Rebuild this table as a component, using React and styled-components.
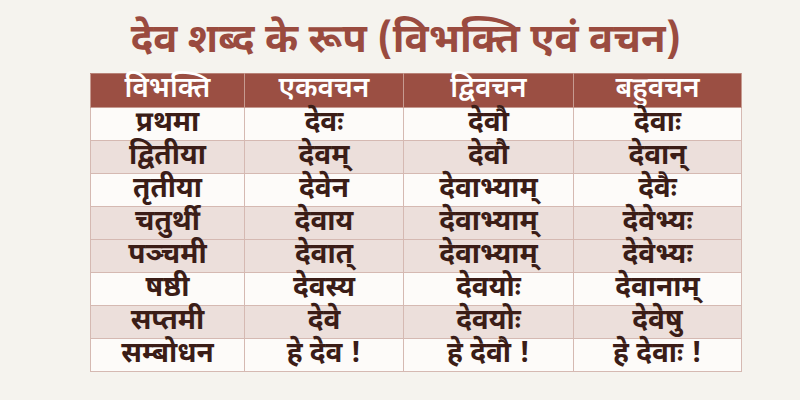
import React from 'react';
import styled, { createGlobalStyle } from 'styled-components';

const GlobalStyle = createGlobalStyle`
  html, body {
    margin: 0;
    padding: 0;
    background: #f5f3ee;
  }
  body {
    font-family: "Noto Sans Devanagari", "Noto Sans", "Liberation Sans", sans-serif;
  }
`;

const Page = styled.div`
  width: 800px;
  height: 400px;
  display: flex;
  flex-direction: column;
  align-items: center;
  background: #f5f3ee;
  overflow: hidden;
`;

const Title = styled.h1`
  margin: 14px 0 0 12px;
  height: 59px;
  font-size: 40px;
  font-weight: 700;
  line-height: 56px;
  color: #9a4b3f;
`;

const Table = styled.table`
  width: 651px;
  margin-left: 32px;
  border-collapse: collapse;
  table-layout: fixed;
`;

const HeadCell = styled.th`
  height: 33px;
  padding: 0;
  background: #9b4f43;
  color: #ffffff;
  font-size: 28px;
  font-weight: 600;
  line-height: 33px;
  text-align: center;
  border: 1px solid #c69a90;
  border-top-color: #b88277;
`;

const Row = styled.tr`
  background: ${(p) => (p.$shaded ? '#ecdfdb' : '#fdfbf9')};
`;

const Cell = styled.td`
  height: 32px;
  padding: 0;
  color: #3b1d17;
  font-size: 28px;
  font-weight: 700;
  line-height: 32px;
  text-align: center;
  border: 1px solid #d5b9b2;
`;

const heads = ['विभक्ति', 'एकवचन', 'द्विवचन', 'बहुवचन'];
const widths = [154, 159, 170, 168];

const rows = [
  { cells: ['प्रथमा', 'देवः', 'देवौ', 'देवाः'], shaded: false },
  { cells: ['द्वितीया', 'देवम्', 'देवौ', 'देवान्'], shaded: true },
  { cells: ['तृतीया', 'देवेन', 'देवाभ्याम्', 'देवैः'], shaded: false },
  { cells: ['चतुर्थी', 'देवाय', 'देवाभ्याम्', 'देवेभ्यः'], shaded: true },
  { cells: ['पञ्चमी', 'देवात्', 'देवाभ्याम्', 'देवेभ्यः'], shaded: true },
  { cells: ['षष्ठी', 'देवस्य', 'देवयोः', 'देवानाम्'], shaded: false },
  { cells: ['सप्तमी', 'देवे', 'देवयोः', 'देवेषु'], shaded: true },
  { cells: ['सम्बोधन', 'हे देव !', 'हे देवौ !', 'हे देवाः !'], shaded: false },
];

export default function App() {
  return (
    <Page>
      <GlobalStyle />
      <Title>देव शब्द के रूप (विभक्ति एवं वचन)</Title>
      <Table>
        <colgroup>
          {widths.map((w) => (
            <col key={w} style={{ width: w }} />
          ))}
        </colgroup>
        <thead>
          <tr>
            {heads.map((h) => (
              <HeadCell key={h}>{h}</HeadCell>
            ))}
          </tr>
        </thead>
        <tbody>
          {rows.map((r) => (
            <Row key={r.cells[0]} $shaded={r.shaded}>
              {r.cells.map((c, i) => (
                <Cell key={i}>{c}</Cell>
              ))}
            </Row>
          ))}
        </tbody>
      </Table>
    </Page>
  );
}
